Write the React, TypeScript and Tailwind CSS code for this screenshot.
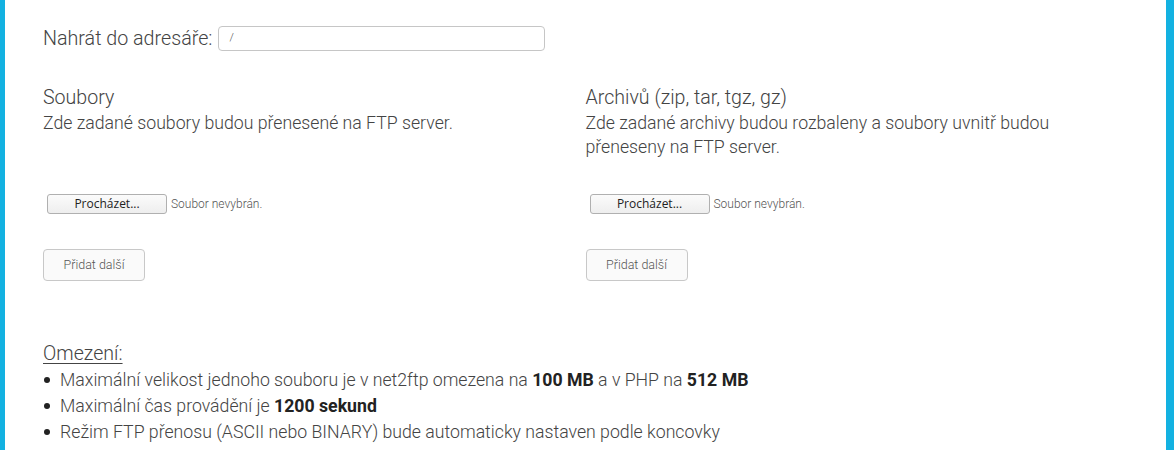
import React from 'react';

const Column = ({ title, desc }: { title: string; desc: string }) => (
    <div className="flex flex-col">
        <h3 className="text-[19.6px] leading-[26px] font-light">{title}</h3>
        <p className="h-[48px] text-[17.7px] leading-[24px] font-light">{desc}</p>
        <div className="mt-[35px] flex items-center pl-[4px]">
            <button className="h-[20px] w-[120px] rounded-[3px] border border-[#b0b0b0] bg-gradient-to-b from-[#fbfbfb] to-[#eeeeee] font-['Open_Sans',sans-serif] text-[12px] font-medium leading-none text-[#222]">
                Procházet...
            </button>
            <span className="ml-[4px] text-[12px] font-light text-[#555]">Soubor nevybrán.</span>
        </div>
        <div className="mt-[35px]">
            <button className="h-[32px] w-[102px] rounded-[4px] border border-[#c8c8c8] bg-[#fafafa] text-[12.5px] font-light text-[#555]">
                Přidat další
            </button>
        </div>
    </div>
);

export default function App() {
    return (
        <div className="min-h-[450px] border-l-[5px] border-r-[8px] border-[#13b1e1] bg-white px-[38px] font-['Roboto_Light','Roboto',sans-serif] font-light text-[#444]">
            <div className="flex items-center pt-[26px]">
                <label className="text-[19.7px] leading-[25px]">Nahrát do adresáře:</label>
                <div className="ml-[5px] flex h-[25px] w-[327px] items-center rounded-[4px] border border-[#c6c6c6] px-[11px] text-[11px] text-[#555]">
                    /
                </div>
            </div>

            <div className="mt-[34px] grid grid-cols-2">
                <Column title="Soubory" desc="Zde zadané soubory budou přenesené na FTP server." />
                <Column
                    title="Archivů (zip, tar, tgz, gz)"
                    desc="Zde zadané archivy budou rozbaleny a soubory uvnitř budou přeneseny na FTP server."
                />
            </div>

            <div className="mt-[60px]">
                <h4 className="text-[19.6px] leading-[26px] underline underline-offset-[3px] decoration-1">Omezení:</h4>
                <ul className="text-[17.7px] leading-[26px]">
                    <li className="flex items-center">
                        <span className="mr-[10px] ml-[1px] h-[6px] w-[6px] rounded-full bg-[#222]" />
                        <span>
                            Maximální velikost jednoho souboru je v net2ftp omezena na <b className="font-['Roboto',sans-serif] font-bold text-[#222]">100 MB</b> a v PHP na{' '}
                            <b className="font-['Roboto',sans-serif] font-bold text-[#222]">512 MB</b>
                        </span>
                    </li>
                    <li className="flex items-center">
                        <span className="mr-[10px] ml-[1px] h-[6px] w-[6px] rounded-full bg-[#222]" />
                        <span>
                            Maximální čas provádění je <b className="font-['Roboto',sans-serif] font-bold text-[#222]">1200 sekund</b>
                        </span>
                    </li>
                    <li className="flex items-center">
                        <span className="mr-[10px] ml-[1px] h-[6px] w-[6px] rounded-full bg-[#222]" />
                        <span>Režim FTP přenosu (ASCII nebo BINARY) bude automaticky nastaven podle koncovky</span>
                    </li>
                </ul>
            </div>
        </div>
    );
}
